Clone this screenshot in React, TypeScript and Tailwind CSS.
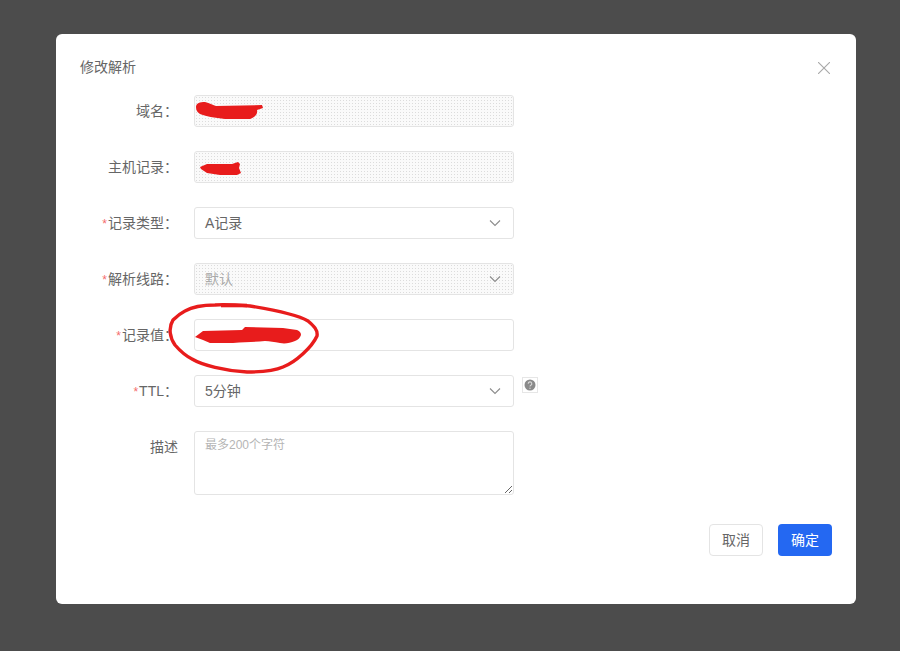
import React from 'react';

const disabledBg =
  'bg-[#fafafa] bg-[radial-gradient(#dcdcdc_0.6px,transparent_0.7px)] bg-[length:3px_3px]';

const Chevron = () => (
  <svg className="absolute right-[12px] top-[11px] h-[8px] w-[12px] text-[#8c8c8c]" viewBox="0 0 12 8" fill="none" stroke="currentColor" strokeWidth="1.1">
    <path d="M1 1.5 6 6.5 11 1.5" />
  </svg>
);

interface RowProps {
  label: string;
  required?: boolean;
  children: React.ReactNode;
}

const Row: React.FC<RowProps> = ({ label, required, children }) => (
  <div className="flex items-start">
    <label className="w-[122px] h-8 shrink-0 flex items-center justify-end text-sm text-[#666]">
      {required && <span className="text-[#f56c6c] text-xs mr-px mt-0.5">*</span>}
      {label}
    </label>
    <div className="ml-4 flex items-start">{children}</div>
  </div>
);

const Field: React.FC<{ disabled?: boolean; select?: boolean; children?: React.ReactNode }> = ({ disabled, select, children }) => (
  <div
    className={`relative h-8 w-[320px] rounded-[3px] border border-[#e4e4e4] px-[10px] flex items-center text-sm text-[#666] ${disabled ? disabledBg : 'bg-white'}`}
  >
    {children}
    {select && <Chevron />}
  </div>
);

const HelpIcon = () => (
  <div className="ml-2 mt-0.5 flex h-4 w-4 items-center justify-center border border-[#e6e6e6] bg-white">
    <svg className="h-3 w-3" viewBox="0 0 12 12">
      <circle cx="6" cy="6" r="5.5" fill="#8a8a8a" />
      <path d="M4.2 4.7a1.8 1.8 0 1 1 2.6 1.6c-.6.3-.8.6-.8 1.2" fill="none" stroke="#d8d8d8" strokeWidth="1.1" />
      <circle cx="6" cy="9.2" r=".7" fill="#d8d8d8" />
    </svg>
  </div>
);

// red marker scribbles drawn over the form, in page coordinates
const Scribbles = () => (
  <svg className="absolute left-0 top-0 h-[651px] w-[900px] pointer-events-none" viewBox="0 0 900 651">
    <path fill="#e81c1c" d="M196 107C196 103 200 102 205 102C210 103 212 105 216 106L262 105 263 108 257 110C258 114 255 117 250 119L225 119C215 118 205 116 200 114C197 112 196 110 196 107Z" />
    <path fill="#e81c1c" d="M200 167 207 164 232 164 238 162 240 164 239 168 241 173 237 175 220 175 207 173 201 169Z" />
    <path fill="#e81c1c" d="M195 337 203 331 242 330 245 327 283 328 297 330C300 331 301 333 301 335C300 338 298 340 295 341C290 343 285 344 280 343C274 342 270 341 265 341C255 342 245 342 233 343L210 343 203 340Z" />
    <path fill="none" stroke="#e81c1c" strokeWidth="3.4" strokeLinecap="round" strokeLinejoin="round"
      d="M173 320C168 328 170 338 175 345C181 352 186 356 192 359C202 365 225 371 247 372C262 372 274 371 283 367C296 362 312 347 317 336C318 330 314 326 308 321C298 315 275 310 250 306C238 305 225 304 215 305C205 305 192 307 185 311C179 314 176 317 173 320Z" />
    <path fill="none" stroke="#e81c1c" strokeWidth="3.6" d="M221 305.5H247" />
  </svg>
);

export default function App() {
  return (
    <div className="relative h-[651px] w-[900px] overflow-hidden bg-[#4c4c4c] pl-[56px] pt-[34px] font-['Liberation_Sans','Noto_Sans_CJK_SC',sans-serif]">
      <div className="relative h-[570px] w-[800px] rounded-md bg-white">
        <div className="flex h-[61px] items-start justify-between pl-6 pr-[26px] pt-6">
          <h2 className="text-sm leading-[18px] text-[#666]">修改解析</h2>
          <button className="mt-1 text-[#a8a8a8]">
            <svg className="h-3 w-3" viewBox="0 0 12 12" fill="none" stroke="currentColor" strokeWidth="1.1">
              <path d="M0 0 12 12M12 0 0 12" />
            </svg>
          </button>
        </div>

        <form className="flex flex-col gap-6">
          <Row label="域名：">
            <Field disabled />
          </Row>
          <Row label="主机记录：">
            <Field disabled />
          </Row>
          <Row label="记录类型：" required>
            <Field select>A记录</Field>
          </Row>
          <Row label="解析线路：" required>
            <Field disabled select>
              <span className="text-[#aaa]">默认</span>
            </Field>
          </Row>
          <Row label="记录值：" required>
            <Field />
          </Row>
          <Row label="TTL：" required>
            <Field select>5分钟</Field>
            <HelpIcon />
          </Row>
          <Row label="描述">
            <textarea
              placeholder="最多200个字符"
              className="block h-16 w-[320px] rounded-[3px] border border-[#e4e4e4] px-[10px] py-[3px] text-xs leading-5 outline-none placeholder:text-[#b5b5b5]"
            />
          </Row>
        </form>

        <div className="mt-[29px] flex justify-end gap-[15px] pr-6">
          <button type="button" className="h-8 w-[54px] rounded-[4px] border border-[#e4e4e4] bg-white text-sm text-[#666]">
            取消
          </button>
          <button type="button" className="h-8 w-[54px] rounded-[4px] bg-[#2468f2] text-sm text-white">
            确定
          </button>
        </div>
      </div>
      <Scribbles />
    </div>
  );
}
